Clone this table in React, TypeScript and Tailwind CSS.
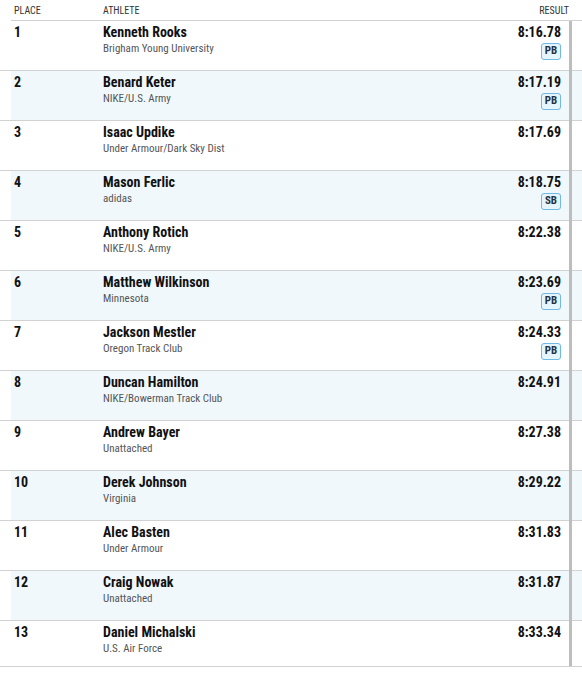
import React from "react";

// --- Data ---
const results = [
  { place: 1, name: "Kenneth Rooks", team: "Brigham Young University", mark: "8:16.78", badge: "PB" },
  { place: 2, name: "Benard Keter", team: "NIKE/U.S. Army", mark: "8:17.19", badge: "PB" },
  { place: 3, name: "Isaac Updike", team: "Under Armour/Dark Sky Dist", mark: "8:17.69" },
  { place: 4, name: "Mason Ferlic", team: "adidas", mark: "8:18.75", badge: "SB" },
  { place: 5, name: "Anthony Rotich", team: "NIKE/U.S. Army", mark: "8:22.38" },
  { place: 6, name: "Matthew Wilkinson", team: "Minnesota", mark: "8:23.69", badge: "PB" },
  { place: 7, name: "Jackson Mestler", team: "Oregon Track Club", mark: "8:24.33", badge: "PB" },
  { place: 8, name: "Duncan Hamilton", team: "NIKE/Bowerman Track Club", mark: "8:24.91" },
  { place: 9, name: "Andrew Bayer", team: "Unattached", mark: "8:27.38" },
  { place: 10, name: "Derek Johnson", team: "Virginia", mark: "8:29.22" },
  { place: 11, name: "Alec Basten", team: "Under Armour", mark: "8:31.83" },
  { place: 12, name: "Craig Nowak", team: "Unattached", mark: "8:31.87" },
  { place: 13, name: "Daniel Michalski", team: "U.S. Air Force", mark: "8:33.34" },
];

const font = "font-['Roboto_Condensed','Liberation_Sans_Narrow','Arial_Narrow',Roboto,sans-serif]";

function Row({ r, last }: { r: (typeof results)[number]; last: boolean }) {
  const striped = r.place % 2 === 0;
  return (
    <div className="border-b border-[#d2d2d2]">
      <div
        className={`ml-[11px] flex pl-[3px] pr-[21px] pt-[2px] ${last ? "h-[45px]" : "h-[49px]"} ${
          striped ? "bg-[#f0f8fc]" : "bg-white"
        }`}
      >
        <div className="w-[89px] text-[14px] font-bold leading-[18px] text-[#111]">{r.place}</div>
        <div className="flex-1">
          <div className="text-[14px] font-bold leading-[18px] text-[#111]">{r.name}</div>
          <div className="mt-[1px] text-[11px] leading-[14px] text-[#555]">{r.team}</div>
        </div>
        <div className="flex flex-col items-end">
          <div className="text-[14px] font-bold leading-[18px] text-[#111]">{r.mark}</div>
          {r.badge && (
            <span className="mt-[2px] flex h-[17px] w-[20px] items-center justify-center rounded-[3px] border border-[#6fb9e2] bg-[#e6f4fc] text-[11px] font-bold text-[#1e3246]">
              {r.badge}
            </span>
          )}
        </div>
      </div>
    </div>
  );
}

export default function App() {
  return (
    <div className={`relative w-[582px] h-[680px] bg-white ${font}`}>
      {/* Header */}
      <div className="ml-[11px] flex h-[21px] items-center border-b border-[#d2d2d2] pl-[3px] pr-[13px] text-[10px] text-[#333]">
        <div className="w-[89px]">PLACE</div>
        <div className="flex-1">ATHLETE</div>
        <div>RESULT</div>
      </div>

      {results.map((r, i) => (
        <Row key={r.place} r={r} last={i === results.length - 1} />
      ))}

      {/* Scroll rail */}
      <div className="absolute left-[569px] top-[21px] h-[645px] w-[3px] bg-[#bdbdbd]" />
    </div>
  );
}
